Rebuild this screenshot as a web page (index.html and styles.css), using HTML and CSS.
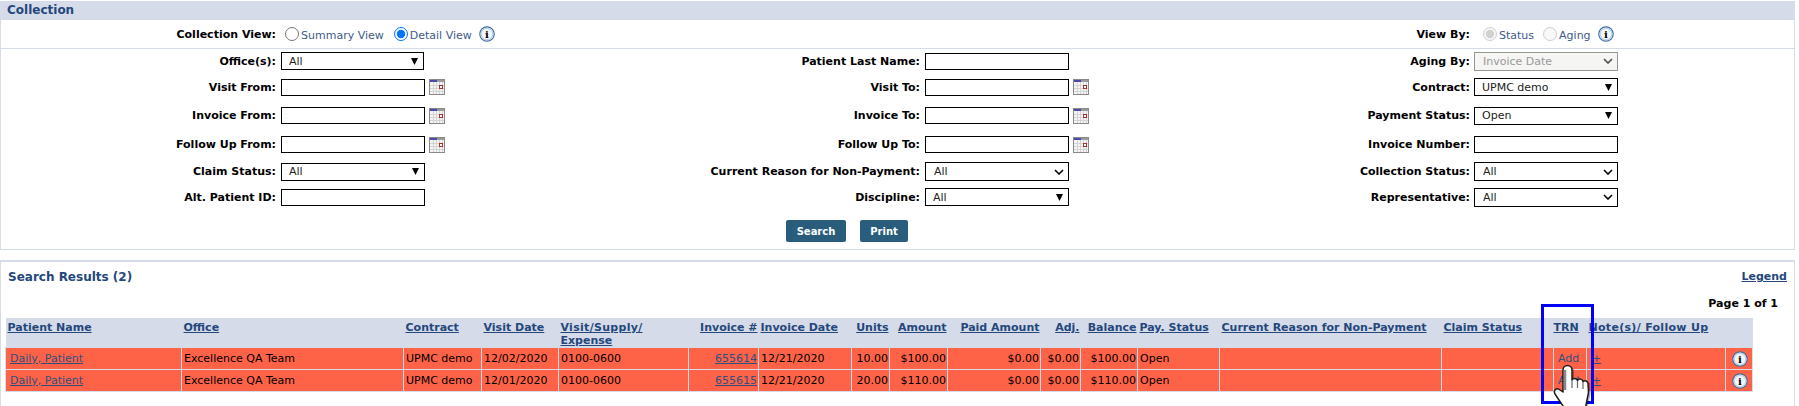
FILE: index.html
```html
<!DOCTYPE html>
<html lang="en">
<head>
    <meta charset="UTF-8">
    <meta name="viewport" content="width=device-width, initial-scale=1.0">
    <title>Collection</title>
    <link rel="stylesheet" href="styles.css">
</head>
<body>
    <svg class="defs" width="0" height="0">
        <symbol id="cal" viewBox="0 0 16 16">
            <rect x="0.5" y="0.5" width="15" height="15" fill="#f4f4f4" stroke="#8a8a8a"/>
            <rect x="1" y="1" width="14" height="2" fill="#9a9a9a"/>
            <rect x="1" y="1" width="7" height="2" fill="#4a4aa8"/>
            <path d="M4.5 3V15M7.5 3V15M10.5 3V15M13.5 3V15M1 6.5H15M1 9.5H15M1 12.5H15" stroke="#d4d4d4" fill="none"/>
            <rect x="10.5" y="6.5" width="3" height="3" fill="#fff" stroke="#a83232"/>
        </symbol>
        <symbol id="info" viewBox="0 0 16 16">
            <circle cx="8" cy="8" r="7.2" fill="#f4f7fa" stroke="#3f6d9e" stroke-width="1.2"/>
            <circle cx="8" cy="8" r="5.8" fill="none" stroke="#bcd0e4" stroke-width="1.1"/>
        </symbol>
    </svg>

    <section class="panel filters">
        <h2 class="panel-title">Collection</h2>

        <div class="view-row">
            <label class="lbl">Collection View:</label>
            <div class="radios radios-left">
                <input type="radio" name="view" id="summary">
                <label for="summary" class="radio-text">Summary View</label>
                <input type="radio" name="view" id="detail" class="gap" checked>
                <label for="detail" class="radio-text">Detail View</label>
                <svg class="info-icon" viewBox="0 0 16 16"><use href="#info"/><text x="8" y="11.6" text-anchor="middle" class="info-i">i</text></svg>
            </div>
            <label class="lbl">View By:</label>
            <div class="radios radios-right">
                <input type="radio" name="by" id="status" checked disabled>
                <label for="status" class="radio-text">Status</label>
                <input type="radio" name="by" id="aging" class="gap" disabled>
                <label for="aging" class="radio-text">Aging</label>
                <svg class="info-icon" viewBox="0 0 16 16"><use href="#info"/><text x="8" y="11.6" text-anchor="middle" class="info-i">i</text></svg>
            </div>
        </div>

        <div class="filter-grid">
            <label class="lbl">Office(s):</label>
            <div class="ctl"><select class="tri narrow"><option>All</option></select></div>
            <label class="lbl">Patient Last Name:</label>
            <div class="ctl"><input type="text"></div>
            <label class="lbl">Aging By:</label>
            <div class="ctl last"><select class="chev" disabled><option>Invoice Date</option></select></div>

            <label class="lbl">Visit From:</label>
            <div class="ctl"><input type="text"><svg class="cal"><use href="#cal"/></svg></div>
            <label class="lbl">Visit To:</label>
            <div class="ctl"><input type="text"><svg class="cal"><use href="#cal"/></svg></div>
            <label class="lbl">Contract:</label>
            <div class="ctl last"><select class="tri"><option>UPMC demo</option></select></div>

            <label class="lbl">Invoice From:</label>
            <div class="ctl"><input type="text"><svg class="cal"><use href="#cal"/></svg></div>
            <label class="lbl">Invoice To:</label>
            <div class="ctl"><input type="text"><svg class="cal"><use href="#cal"/></svg></div>
            <label class="lbl">Payment Status:</label>
            <div class="ctl last"><select class="tri"><option>Open</option></select></div>

            <label class="lbl">Follow Up From:</label>
            <div class="ctl"><input type="text"><svg class="cal"><use href="#cal"/></svg></div>
            <label class="lbl">Follow Up To:</label>
            <div class="ctl"><input type="text"><svg class="cal"><use href="#cal"/></svg></div>
            <label class="lbl">Invoice Number:</label>
            <div class="ctl last"><input type="text"></div>

            <label class="lbl">Claim Status:</label>
            <div class="ctl"><select class="tri"><option>All</option></select></div>
            <label class="lbl">Current Reason for Non-Payment:</label>
            <div class="ctl"><select class="chev"><option>All</option></select></div>
            <label class="lbl">Collection Status:</label>
            <div class="ctl last"><select class="chev"><option>All</option></select></div>

            <label class="lbl">Alt. Patient ID:</label>
            <div class="ctl"><input type="text"></div>
            <label class="lbl">Discipline:</label>
            <div class="ctl"><select class="tri"><option>All</option></select></div>
            <label class="lbl">Representative:</label>
            <div class="ctl last"><select class="chev"><option>All</option></select></div>
        </div>

        <div class="actions">
            <button type="button" class="btn-search">Search</button>
            <button type="button" class="btn-print">Print</button>
        </div>
    </section>

    <section class="panel results">
        <div class="results-head">
            <h3>Search Results (2)</h3>
            <a href="#" class="legend">Legend</a>
        </div>
        <div class="results-page">Page 1 of 1</div>

        <table class="grid">
            <colgroup>
                <col class="c-name"><col class="c-office"><col class="c-contract"><col class="c-visit">
                <col class="c-supply"><col class="c-inv"><col class="c-invdate"><col class="c-units">
                <col class="c-amount"><col class="c-paid"><col class="c-adj"><col class="c-balance">
                <col class="c-status"><col class="c-reason"><col class="c-claim"><col class="c-trn">
                <col class="c-notes"><col class="c-info">
            </colgroup>
            <thead>
                <tr>
                    <th><a href="#">Patient Name</a></th>
                    <th><a href="#">Office</a></th>
                    <th><a href="#">Contract</a></th>
                    <th><a href="#">Visit Date</a></th>
                    <th><a href="#"><span class="wide">Visit/Supply/</span> Expense</a></th>
                    <th class="num"><a href="#">Invoice #</a></th>
                    <th><a href="#">Invoice Date</a></th>
                    <th class="num"><a href="#">Units</a></th>
                    <th class="num"><a href="#">Amount</a></th>
                    <th class="num"><a href="#">Paid Amount</a></th>
                    <th class="num"><a href="#">Adj.</a></th>
                    <th class="num"><a href="#">Balance</a></th>
                    <th><a href="#">Pay. Status</a></th>
                    <th><a href="#">Current Reason for Non-Payment</a></th>
                    <th><a href="#">Claim Status</a></th>
                    <th class="mid"><a href="#">TRN</a></th>
                    <th class="nowrap"><a href="#" class="wide">Note(s)/ Follow Up</a></th>
                    <th></th>
                </tr>
            </thead>
            <tbody>
                <tr>
                    <td class="name"><a href="#">Daily, Patient</a></td>
                    <td>Excellence QA Team</td>
                    <td>UPMC demo</td>
                    <td>12/02/2020</td>
                    <td>0100-0600</td>
                    <td class="num"><a href="#" class="soft">655614</a></td>
                    <td>12/21/2020</td>
                    <td class="num">10.00</td>
                    <td class="num">$100.00</td>
                    <td class="num">$0.00</td>
                    <td class="num">$0.00</td>
                    <td class="num">$100.00</td>
                    <td>Open</td>
                    <td></td>
                    <td></td>
                    <td class="add"><a href="#" class="plain">Add</a></td>
                    <td class="plus"><a href="#" class="soft">+</a></td>
                    <td class="icon"><svg class="info-icon row-info" viewBox="0 0 16 16"><use href="#info"/><text x="8" y="11.6" text-anchor="middle" class="info-i">i</text></svg></td>
                </tr>
                <tr>
                    <td class="name"><a href="#">Daily, Patient</a></td>
                    <td>Excellence QA Team</td>
                    <td>UPMC demo</td>
                    <td>12/01/2020</td>
                    <td>0100-0600</td>
                    <td class="num"><a href="#" class="soft">655615</a></td>
                    <td>12/21/2020</td>
                    <td class="num">20.00</td>
                    <td class="num">$110.00</td>
                    <td class="num">$0.00</td>
                    <td class="num">$0.00</td>
                    <td class="num">$110.00</td>
                    <td>Open</td>
                    <td></td>
                    <td></td>
                    <td class="add"><a href="#" class="plain">Add</a></td>
                    <td class="plus"><a href="#" class="soft">+</a></td>
                    <td class="icon"><svg class="info-icon row-info" viewBox="0 0 16 16"><use href="#info"/><text x="8" y="11.6" text-anchor="middle" class="info-i">i</text></svg></td>
                </tr>
            </tbody>
        </table>
    </section>

    <!-- annotation drawn over the screenshot -->
    <div class="highlight"></div>
    <svg class="hand" width="46" height="48" viewBox="0 0 46 48">
        <path d="M15 32V10a4.5 4.5 0 0 1 9 0v10a3 3 0 0 1 5.5 0.5a3 3 0 0 1 5.5 1a3 3 0 0 1 5 2l0.5 9l-3 15H16L7 34c-2-4 2-7 5-4z" fill="#000" opacity=".3" transform="translate(2 1)"/>
        <path d="M15 32V10a4.5 4.5 0 0 1 9 0v10a3 3 0 0 1 5.5 0.5a3 3 0 0 1 5.5 1a3 3 0 0 1 5 2l0.5 9l-3 15H16L7 34c-2-4 2-7 5-4z" fill="#fff" stroke="#1c1c1c" stroke-width="1.5" stroke-linejoin="round"/>
        <path d="M24 20v8M29.5 21v7M35 22v7" stroke="#666" stroke-width="1.2" fill="none"/>
        <path d="M17 10v20" stroke="#888" stroke-width="2.5" fill="none"/>
    </svg>
</body>
</html>
```

FILE: styles.css
```css
* {
    box-sizing: border-box;
}

html, body {
    height: 406px;
    overflow: hidden;
}

body {
    margin: 0;
    background: #fff;
    font-family: "DejaVu Sans", Verdana, sans-serif;
    font-size: 11px;
    color: #000;
    position: relative;
}

a {
    color: #24477c;
}

.defs {
    position: absolute;
}

.panel {
    width: 1795px;
    border: 1px solid #d5dbe8;
}

/* filter panel */
.filters {
    height: 249px;
    border-top: 0;
    margin-top: 1px;
}

.panel-title {
    margin: 0;
    padding: 2px 0 3px 6px;
    background: #d5dbe8;
    color: #24477c;
    font-size: 12px;
    line-height: 14px;
    font-weight: bold;
}

.view-row {
    display: grid;
    grid-template-columns: 275px 900px 294px 1fr;
    height: 29px;
    align-items: center;
    border-bottom: 1px solid #d5dbe8;
}

.lbl {
    font-weight: bold;
    text-align: right;
    white-space: nowrap;
}

.radios {
    display: flex;
    align-items: center;
}

.radios input {
    margin: 0;
    width: 14px;
    height: 14px;
    flex: none;
}

.radio-text {
    margin-left: 2px;
    padding-top: 2px;
    color: #3d5a88;
}

.radios-left {
    padding-left: 9px;
}

.radios-left .gap {
    margin-left: 10px;
}

.radios-right {
    padding-left: 13px;
}

.radios-right .gap {
    margin-left: 9px;
}

.info-icon {
    width: 16px;
    height: 16px;
    flex: none;
    margin-left: 7px;
    margin-top: -1px;
}

.info-i {
    font-family: "DejaVu Serif", serif;
    font-size: 10px;
    font-weight: bold;
    fill: #000;
}

.filter-grid {
    display: grid;
    grid-template-columns: 275px 173px 471px 174px 376px 1fr;
    grid-template-rows: 24px 28px 29px 29px 25px 26px;
    align-items: center;
}

.ctl {
    display: flex;
    align-items: center;
    padding-left: 5px;
}

.ctl.last {
    padding-left: 4px;
}

input[type="text"], select {
    width: 144px;
    height: 17px;
    border: 1px solid #000;
    border-radius: 0;
    background-color: #fff;
    padding: 0;
    margin: 0;
    font-family: inherit;
    font-size: 11px;
    color: #222;
}

select {
    appearance: none;
    padding-left: 7px;
    background-repeat: no-repeat;
}

select.narrow {
    width: 143px;
}

select.tri {
    height: 18px;
    background-image: url("data:image/svg+xml,%3Csvg xmlns='http://www.w3.org/2000/svg' width='7' height='7'%3E%3Cpath d='M0 0H7L3.5 7Z' fill='%23000'/%3E%3C/svg%3E");
    background-position: right 5px center;
}

select.chev {
    height: 19px;
    padding-left: 8px;
    background-image: url("data:image/svg+xml,%3Csvg xmlns='http://www.w3.org/2000/svg' width='10' height='6'%3E%3Cpath d='M1 1L5 5L9 1' fill='none' stroke='%23000' stroke-width='1.6'/%3E%3C/svg%3E");
    background-position: right 4px center;
}

select:disabled {
    border-color: #6b6b6b;
    background-color: #f2f2ee;
    color: #6d6d6d;
}

.cal {
    width: 16px;
    height: 16px;
    margin-left: 4px;
    flex: none;
}

.actions {
    display: flex;
    gap: 14px;
    padding: 10px 0 0 785px;
}

.actions button {
    height: 22px;
    border: none;
    border-radius: 2px;
    background: #2a5d7c;
    color: #fff;
    font-family: inherit;
    font-size: 10px;
    font-weight: bold;
    padding: 0;
    cursor: pointer;
}

.btn-search {
    width: 60px;
}

.btn-print {
    width: 48px;
}

/* results panel */
.results {
    margin-top: 10px;
    height: 146px;
    border-width: 2px 1px 0 1px;
    padding-left: 4px;
}

.results-head {
    display: flex;
    justify-content: space-between;
    align-items: center;
    height: 29px;
    padding: 0 7px 0 3px;
}

.results-head h3 {
    margin: 0;
    font-size: 12px;
    font-weight: bold;
    color: #24477c;
}

.legend {
    font-weight: bold;
}

.results-page {
    height: 27px;
    line-height: 25px;
    padding-right: 16px;
    text-align: right;
    font-weight: bold;
}

.grid {
    width: 1747px;
    table-layout: fixed;
    border-collapse: collapse;
}

.c-name { width: 176px; }
.c-office { width: 222px; }
.c-contract { width: 78px; }
.c-visit { width: 77px; }
.c-supply { width: 130px; }
.c-inv { width: 70px; }
.c-invdate { width: 93px; }
.c-units { width: 38px; }
.c-amount { width: 58px; }
.c-paid { width: 93px; }
.c-adj { width: 40px; }
.c-balance { width: 57px; }
.c-status { width: 82px; }
.c-reason { width: 222px; }
.c-claim { width: 112px; }
.c-trn { width: 33px; }
.c-notes { width: 139px; }
.c-info { width: 27px; }

.grid th {
    height: 29px;
    background: #d5dbe8;
    padding: 3px 1px 0 2px;
    text-align: left;
    vertical-align: top;
    font-weight: bold;
    line-height: 13px;
}

.grid th.num, .grid td.num {
    text-align: right;
}

.grid th.mid {
    padding-left: 0;
    padding-right: 0;
}

.grid th.nowrap {
    white-space: nowrap;
    overflow: visible;
}

.wide {
    letter-spacing: 0.3px;
}

.grid td {
    height: 22px;
    padding: 0 1px 0 2px;
    background: #ff6347;
    border: 1px solid #d5dbe8;
    white-space: nowrap;
    line-height: 14px;
}

.grid td.name {
    padding-left: 4px;
}

.grid a.soft, .grid td.name a {
    color: #2f4f80;
}

.grid a.plain {
    color: #2f4f80;
    text-decoration: none;
}

.grid td.add {
    padding-left: 4px;
}

.grid td.plus {
    padding-left: 5px;
}

.grid td.icon {
    padding: 0 0 0 6px;
}

.row-info {
    display: block;
    margin: 0;
}

/* overlays */
.highlight {
    position: absolute;
    left: 1541px;
    top: 304px;
    width: 53px;
    height: 100px;
    border: 3px solid #0000ff;
}

.hand {
    position: absolute;
    left: 1548px;
    top: 360px;
}
```
